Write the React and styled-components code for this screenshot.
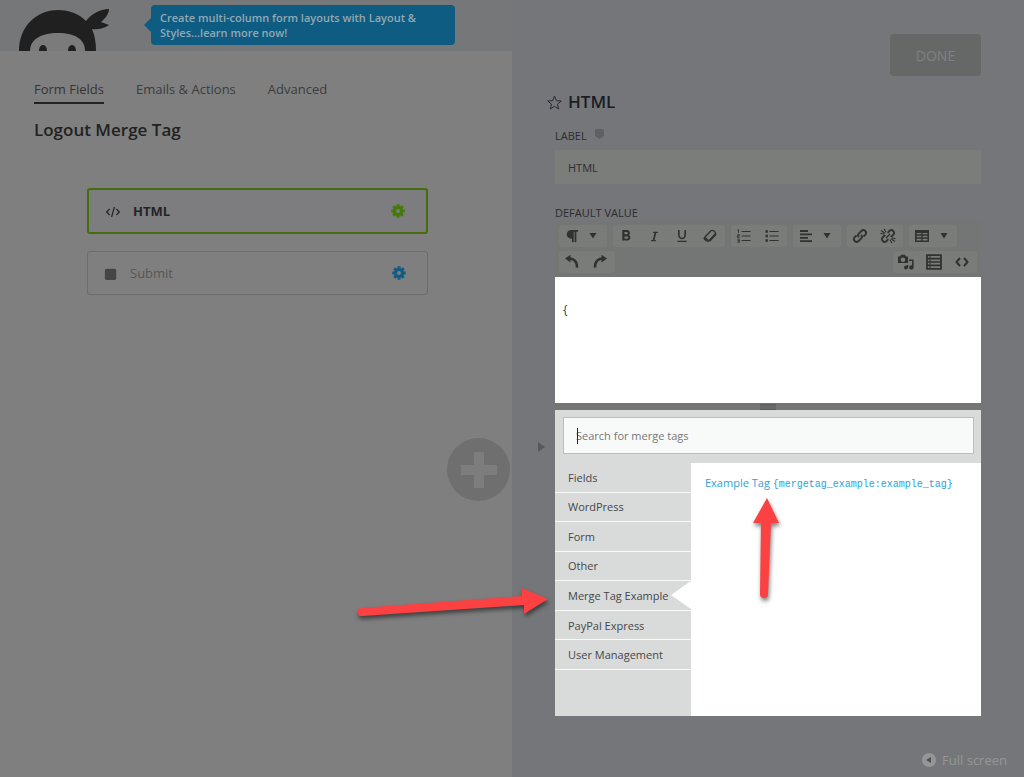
import React, { useState } from 'react';
import styled, { createGlobalStyle, css } from 'styled-components';
import { FaParagraph, FaItalic } from 'react-icons/fa';
import { MdFormatBold, MdFormatUnderlined } from 'react-icons/md';

const GlobalStyle = createGlobalStyle`
  * {
    box-sizing: border-box;
  }
  body {
    margin: 0;
    background-color: #757679;
    font-family: 'Open Sans', 'Noto Sans', sans-serif;
    font-size: 11px;
    color: #2e2f30;
  }
  button, input {
    font: inherit;
    color: inherit;
  }
  a {
    text-decoration: none;
    color: inherit;
  }
`;

const Page = styled.div`
  position: relative;
  display: grid;
  grid-template-columns: 1fr 1fr;
  min-height: 100vh;
`;

/* builder side */

const Builder = styled.main`
  display: flex;
  flex-direction: column;
  position: relative;
  background-color: #7f7f7f;
`;

const Header = styled.header`
  display: flex;
  align-items: flex-start;
  gap: 41px;
  height: 51px;
  padding: 5px 0 0 18px;
  background-color: #767778;
`;

const Logo = styled.svg`
  flex: none;
  margin-top: 4px;
`;

const Promo = styled.a`
  position: relative;
  width: 304px;
  height: 40px;
  padding: 5px 9px;
  border-radius: 4px;
  background-color: #0f5c82;
  color: #93a9b4;
  font-size: 11px;
  font-weight: 600;
  line-height: 15px;

  &::before {
    content: '';
    position: absolute;
    left: -7px;
    top: 13px;
    border: 7px solid transparent;
    border-left: 0;
    border-right-color: #0f5c82;
  }
`;

const Tabs = styled.nav`
  display: flex;
  gap: 32px;
  padding: 28px 34px 0;
`;

const Tab = styled.a`
  height: 25px;
  font-size: 13px;
  line-height: 20px;
  color: ${(props) => (props.$active ? '#343434' : '#3c3c3c')};
  border-bottom: 2px solid ${(props) => (props.$active ? '#222' : 'transparent')};
`;

const FormTitle = styled.h1`
  margin: 14px 34px 0;
  font-size: 17px;
  font-weight: 600;
  line-height: 24px;
  color: #222;
`;

const FieldList = styled.div`
  display: flex;
  flex-direction: column;
  gap: 17px;
  padding: 46px 84px 0 87px;
`;

const Field = styled.div`
  display: flex;
  align-items: center;
  height: ${(props) => (props.$active ? 46 : 44)}px;
  padding: 0 21px 0 16px;
  gap: 12px;
  border: 2px solid #436d0e;
  border-radius: 3px;
  background-color: #7d7d80;
  font-size: 13px;
  font-weight: 700;
  color: #242426;

  ${(props) =>
    !props.$active &&
    css`
      border: 1px solid #6b6c6e;
      background-color: #7f7f7f;
      font-weight: 400;
      color: #565656;
    `}
`;

const FieldName = styled.span`
  flex: 1;
  line-height: 20px;
`;

const GearButton = styled.button`
  display: flex;
  padding: 0;
  border: 0;
  background: none;
  color: ${(props) => props.$color};
`;

const AddButton = styled.button`
  position: absolute;
  right: 2px;
  top: 438px;
  width: 63px;
  height: 63px;
  padding: 0;
  border: 0;
  border-radius: 50%;
  background-color: #6f6f6f;
`;

/* drawer side */

const Drawer = styled.aside`
  position: relative;
  display: flex;
  flex-direction: column;
  padding: 34px 43px 0;
  background-color: #757679;
`;

const DrawerToggle = styled.button`
  position: absolute;
  left: 25px;
  top: 442px;
  display: flex;
  padding: 0;
  border: 0;
  background: none;
`;

const DoneButton = styled.button`
  align-self: flex-end;
  width: 91px;
  height: 42px;
  border: 0;
  border-radius: 4px;
  background-color: #666867;
  color: #808182;
  font-size: 14px;
`;

const DrawerTitle = styled.h2`
  display: flex;
  align-items: center;
  gap: 6px;
  margin: 14px 0 0 -8px;
  font-size: 17px;
  font-weight: 600;
  line-height: 24px;
  color: #1b1d23;
`;

const Label = styled.label`
  display: flex;
  gap: 8px;
  margin-top: ${(props) => props.$top}px;
  font-size: 11px;
  line-height: 16px;
  color: #2b2c2e;
`;

const LabelInput = styled.input`
  width: 100%;
  height: 34px;
  margin-top: 6px;
  padding: 0 13px;
  border: 0;
  background-color: #7b7d7b;
  color: #2b2c2b;
`;

const Editor = styled.section`
  display: flex;
  flex-direction: column;
  background-color: #747675;
`;

const Toolbar = styled.div`
  display: flex;
  flex-direction: column;
  gap: 4px;
  padding: 4px 4px;
`;

const ToolRow = styled.div`
  display: flex;
  gap: 6px;
`;

const ToolGroup = styled.div`
  display: flex;
  margin-left: ${(props) => (props.$end ? 'auto' : 0)};
  border-radius: 3px;
  background-color: #7a7c7a;
`;

const ToolButton = styled.button`
  display: flex;
  align-items: center;
  justify-content: center;
  gap: 10px;
  width: ${(props) => (props.$menu ? 48 : 28)}px;
  height: 22px;
  padding: 0 ${(props) => (props.$menu ? 4 : 2)}px 0 0;
  border: 0;
  background: none;
  color: #303231;
`;

const TextArea = styled.textarea`
  display: block;
  width: 100%;
  height: 126px;
  padding: 24px 8px;
  border: 0;
  outline: 0;
  resize: none;
  background-color: #fff;
  color: #444;
  font-family: inherit;
  font-size: 12px;
  line-height: 18px;
`;

const Grip = styled.div`
  display: flex;
  justify-content: center;
  align-items: center;
  height: 7px;

  &::before {
    content: '';
    width: 16px;
    height: 4px;
    border: 1px solid #5a5b5b;
    border-width: 1px 0;
    background-color: #686a69;
  }
`;

const TagBox = styled.section`
  display: flex;
  flex-direction: column;
  background-color: #d9dbdb;
`;

const SearchWrap = styled.div`
  position: relative;
  padding: 7px 7px 9px 8px;
`;

const SearchInput = styled.input`
  display: block;
  width: 100%;
  height: 37px;
  padding: 0 12px;
  border: 1px solid #a9c3cf;
  outline: 0;
  background-color: #f8fafa;
  color: #424242;
  caret-color: transparent;

  &::placeholder {
    color: #777;
    opacity: 1;
  }
`;

const Caret = styled.span`
  position: absolute;
  left: 22px;
  top: 18px;
  width: 1px;
  height: 16px;
  background-color: #222;
`;

const TagBody = styled.div`
  display: grid;
  grid-template-columns: 136px 1fr;
  min-height: 253px;
`;

const Categories = styled.ul`
  display: grid;
  grid-template-rows: repeat(7, 1fr);
  height: 207px;
  margin: 0;
  padding: 0;
  list-style: none;
`;

const Category = styled.li`
  position: relative;
  display: flex;
  border-bottom: 1px solid #fafafa;

  ${(props) =>
    props.$active &&
    css`
      &::after {
        content: '';
        position: absolute;
        right: 0;
        top: 0;
        border: 14px solid transparent;
        border-left: 0;
        border-right: 20px solid #fff;
      }
    `}
`;

const CategoryButton = styled.button`
  flex: 1;
  padding: 0 0 0 13px;
  border: 0;
  background: none;
  color: #464748;
  text-align: left;
  white-space: nowrap;
`;

const TagList = styled.div`
  padding: 11px 14px;
  background-color: #fff;
  color: #2ea2d4;
  line-height: 18px;
  white-space: nowrap;
`;

const TagCode = styled.code`
  font-family: 'Liberation Mono', 'Courier New', monospace;
  font-size: 10px;
`;

const FullScreen = styled.a`
  display: flex;
  align-items: center;
  align-self: flex-end;
  gap: 6px;
  margin: auto -26px 7px 0;
  color: #959698;
  font-size: 13px;
  line-height: 20px;
`;

const Arrows = styled.svg`
  position: absolute;
  left: 340px;
  top: 480px;
  pointer-events: none;
  filter: drop-shadow(1px 3px 2px rgba(0, 0, 0, 0.5));
`;

const Icon = ({ size = 16, box = 16, children }) => (
  <svg
    width={size}
    height={size}
    viewBox={`0 0 ${box} ${box}`}
    fill="none"
    stroke="currentColor"
    strokeWidth="1.6"
    aria-hidden="true"
  >
    {children}
  </svg>
);

const CaretDown = () => (
  <svg width="8" height="6" viewBox="0 0 8 6" fill="currentColor" aria-hidden="true">
    <path d="M0.5 0h7L4 5.5z" />
  </svg>
);

const Gear = () => (
  <Icon size={14}>
    <circle cx="8" cy="8" r="4" strokeWidth="3.6" />
    {[0, 45, 90, 135].map((deg) => (
      <path
        key={deg}
        d="M8 0.3v3.5M8 12.2v3.5"
        strokeWidth="3.4"
        transform={`rotate(${deg} 8 8)`}
      />
    ))}
  </Icon>
);

const Eraser = () => (
  <Icon>
    <path d="M2.5 9.5 9 2.8q1.2-1 2.6 0l1.2 1q1.4 1.2.2 2.6l-5.8 6.5H4.4L2.4 11q-.6-.8.1-1.5z" strokeWidth="1.3" />
    <path d="M2.6 9.8 7 13.2M7.4 13 14 5.8" strokeWidth="2" />
  </Icon>
);

const OrderedList = () => (
  <Icon>
    <path d="M5.5 3.5h9M5.5 8h9M5.5 12.5h9" strokeWidth="1.2" />
    <path d="M2.5 1.5v3.4M1.3 2.3l1.2-.6M1.3 6.6h2v1.3h-2v1.5h2.3M1.3 11.2h2v1.5h-1.5 1.5v1.6h-2" strokeWidth="0.9" />
  </Icon>
);

const BulletList = () => (
  <Icon>
    <path d="M5.5 3.5h9M5.5 8h9M5.5 12.5h9" strokeWidth="1.2" />
    <path d="M1.5 3.5h2.4M1.5 8h2.4M1.5 12.5h2.4" strokeWidth="2.4" />
  </Icon>
);

const AlignLeft = () => (
  <Icon size={14} box={14}>
    <path d="M1 2h8M1 5.4h12M1 8.8h8M1 12.2h12" strokeWidth="1.8" />
  </Icon>
);

const linkPath =
  'M7 9.2a2.7 2.7 0 0 1 0-3.8l2.6-2.6a2.7 2.7 0 0 1 3.8 3.8l-2 2M9 6.8a2.7 2.7 0 0 1 0 3.8l-2.6 2.6a2.7 2.7 0 0 1-3.8-3.8l2-2';

const LinkIcon = () => (
  <Icon>
    <path d={linkPath} strokeWidth="1.9" />
  </Icon>
);

const UnlinkIcon = () => (
  <Icon>
    <path
      d="M7.6 4.8l2-2a2.7 2.7 0 0 1 3.8 3.8l-2.6 2.6M8.4 11.2l-2 2a2.7 2.7 0 0 1-3.8-3.8l2.6-2.6"
      strokeWidth="1.9"
    />
    <path d="M1 2.5l4 2.8M4 .8l2 3.4M.6 5.4l3.4.6M15 13.5l-4-2.8M12 15.2l-2-3.4M15.4 10.6l-3.4-.6" strokeWidth="1.1" />
    <path d="M10 6l-4 4" strokeWidth="1.4" />
  </Icon>
);

const TableIcon = () => (
  <Icon>
    <path d="M1.8 2.8h12.4v10.4H1.8z" strokeWidth="1.6" />
    <path d="M1.5 3.8h13" strokeWidth="2.4" />
    <path d="M2 7h12M2 10h12M8 4v9" strokeWidth="1.3" />
  </Icon>
);

const Undo = () => (
  <Icon>
    <path d="M4 4.6c6-.4 9.2 2.8 9 9" strokeWidth="2.5" />
    <path d="M1 4.6 6.5.8v7.6z" fill="currentColor" stroke="none" />
  </Icon>
);

const Redo = () => (
  <Icon>
    <path d="M12 4.6c-6-.4-9.2 2.8-9 9" strokeWidth="2.5" />
    <path d="M15 4.6 9.5.8v7.6z" fill="currentColor" stroke="none" />
  </Icon>
);

const Media = () => (
  <Icon>
    <path
      d="M0 2.5h2L3 .8h4l1 1.7h2V9H0zM5 3.4a2.3 2.3 0 1 0 0 4.6 2.3 2.3 0 0 0 0-4.6z"
      fill="currentColor"
      stroke="none"
      fillRule="evenodd"
    />
    <path d="M9.5 13.5V11M11 6.2h3.8v6.6" strokeWidth="1.6" />
    <circle cx="8" cy="13.6" r="2" fill="currentColor" stroke="none" />
    <circle cx="13.4" cy="13.4" r="2.2" fill="currentColor" stroke="none" />
  </Icon>
);

const MergeTags = () => (
  <Icon>
    <path d="M1 1.2h14v13.6H1z" strokeWidth="1.8" />
    <path d="M1 4.6h14M1 8h14M1 11.4h14" strokeWidth="1.6" />
    <path d="M4 1v14" strokeWidth="1" />
  </Icon>
);

const CodeIcon = () => (
  <Icon>
    <path d="M6 4 2.5 8 6 12M10 4l3.5 4L10 12" strokeWidth="2" />
  </Icon>
);

const categories = [
  'Fields',
  'WordPress',
  'Form',
  'Other',
  'Merge Tag Example',
  'PayPal Express',
  'User Management',
];

function NinjaLogo() {
  return (
    <Logo width="92" height="42" viewBox="0 0 92 42" role="img" aria-label="Ninja Forms">
      <path
        d="M1 42C1 18 18 1 40 1c12 0 21 4 28 11C73 5 82 0 91 0c0 4-3 9-8 13l8 3c-6 4-12 5-17 4 3 7 4 14 4 22z"
        fill="#202020"
      />
      <path d="M12 42c0-11 10-18 28-18s27 7 27 18z" fill="#7b7b7b" />
      <path d="M21 42c0-8 8-8 8 0zM50 42c0-8 8-8 8 0z" fill="#202020" />
    </Logo>
  );
}

function BuilderPanel() {
  return (
    <Builder>
      <Header>
        <NinjaLogo />
        <Promo href="#layout">
          Create multi-column form layouts with Layout &amp; Styles...learn more now!
        </Promo>
      </Header>
      <Tabs>
        <Tab href="#fields" $active>
          Form Fields
        </Tab>
        <Tab href="#actions">Emails &amp; Actions</Tab>
        <Tab href="#advanced">Advanced</Tab>
      </Tabs>
      <FormTitle>Logout Merge Tag</FormTitle>
      <FieldList>
        <Field $active>
          <Icon size={16}>
            <path d="M4.6 6 1.6 9l3 3M11.4 6l3 3-3 3M9.4 4 6.6 14" strokeWidth="1.2" />
          </Icon>
          <FieldName>HTML</FieldName>
          <GearButton $color="#447a08" aria-label="HTML settings">
            <Gear />
          </GearButton>
        </Field>
        <Field>
          <Icon size={14}>
            <rect x="1" y="3" width="13" height="13" rx="2" fill="#454545" stroke="none" />
          </Icon>
          <FieldName>Submit</FieldName>
          <GearButton $color="#125c84" aria-label="Submit settings">
            <Gear />
          </GearButton>
        </Field>
      </FieldList>
      <AddButton aria-label="Add new field">
        <svg width="63" height="63" viewBox="0 0 63 63">
          <path d="M32 14v36M14 32h36" stroke="#7d7d7d" strokeWidth="10" />
        </svg>
      </AddButton>
    </Builder>
  );
}

function EditorToolbar() {
  return (
    <Toolbar>
      <ToolRow>
        <ToolGroup>
          <ToolButton $menu aria-label="Paragraph style">
            <FaParagraph size={14} />
            <CaretDown />
          </ToolButton>
        </ToolGroup>
        <ToolGroup>
          <ToolButton aria-label="Bold">
            <MdFormatBold size={18} />
          </ToolButton>
          <ToolButton aria-label="Italic">
            <FaItalic size={11} />
          </ToolButton>
          <ToolButton aria-label="Underline">
            <MdFormatUnderlined size={16} />
          </ToolButton>
          <ToolButton aria-label="Clear formatting">
            <Eraser />
          </ToolButton>
        </ToolGroup>
        <ToolGroup>
          <ToolButton aria-label="Ordered list">
            <OrderedList />
          </ToolButton>
          <ToolButton aria-label="Unordered list">
            <BulletList />
          </ToolButton>
        </ToolGroup>
        <ToolGroup>
          <ToolButton $menu aria-label="Align">
            <AlignLeft />
            <CaretDown />
          </ToolButton>
        </ToolGroup>
        <ToolGroup>
          <ToolButton aria-label="Link">
            <LinkIcon />
          </ToolButton>
          <ToolButton aria-label="Unlink">
            <UnlinkIcon />
          </ToolButton>
        </ToolGroup>
        <ToolGroup>
          <ToolButton $menu aria-label="Table">
            <TableIcon />
            <CaretDown />
          </ToolButton>
        </ToolGroup>
      </ToolRow>
      <ToolRow>
        <ToolGroup>
          <ToolButton aria-label="Undo">
            <Undo />
          </ToolButton>
          <ToolButton aria-label="Redo">
            <Redo />
          </ToolButton>
        </ToolGroup>
        <ToolGroup $end>
          <ToolButton aria-label="Insert media">
            <Media />
          </ToolButton>
          <ToolButton aria-label="Insert merge tag">
            <MergeTags />
          </ToolButton>
          <ToolButton aria-label="Code view">
            <CodeIcon />
          </ToolButton>
        </ToolGroup>
      </ToolRow>
    </Toolbar>
  );
}

function MergeTagBox() {
  const [active, setActive] = useState('Merge Tag Example');

  return (
    <TagBox>
      <SearchWrap>
        <SearchInput type="text" placeholder="Search for merge tags" aria-label="Search for merge tags" />
        <Caret />
      </SearchWrap>
      <TagBody>
        <Categories>
          {categories.map((name) => (
            <Category key={name} $active={name === active}>
              <CategoryButton onClick={() => setActive(name)}>{name}</CategoryButton>
            </Category>
          ))}
        </Categories>
        <TagList>
          <a href="#example-tag">
            Example Tag <TagCode>{'{mergetag_example:example_tag}'}</TagCode>
          </a>
        </TagList>
      </TagBody>
    </TagBox>
  );
}

function SettingsDrawer() {
  return (
    <Drawer>
      <DrawerToggle aria-label="Close drawer">
        <svg width="9" height="10" viewBox="0 0 9 10">
          <path d="M1 0v10l7-5z" fill="#58595b" />
        </svg>
      </DrawerToggle>
      <DoneButton>DONE</DoneButton>
      <DrawerTitle>
        <Icon size={15}>
          <path
            d="M8 1.2l2 4.8 5.2.4-4 3.4 1.3 5.1L8 12.1l-4.5 2.8 1.3-5.1-4-3.4L6 6z"
            strokeWidth="0.9"
          />
        </Icon>
        HTML
      </DrawerTitle>
      <Label htmlFor="label" $top={14}>
        LABEL
        <svg width="9" height="11" viewBox="0 0 9 11" aria-hidden="true">
          <path d="M1 1h7l1 1v6L4.5 11 0 8V2z" fill="#5f6062" />
        </svg>
      </Label>
      <LabelInput id="label" type="text" defaultValue="HTML" />
      <Label htmlFor="default-value" $top={21}>
        DEFAULT VALUE
      </Label>
      <Editor>
        <EditorToolbar />
        <TextArea id="default-value" defaultValue="{" />
        <Grip />
      </Editor>
      <MergeTagBox />
      <FullScreen href="#fullscreen">
        <svg width="14" height="14" viewBox="0 0 14 14" aria-hidden="true">
          <circle cx="7" cy="7" r="7" fill="#959698" />
          <path d="M9 4v6L4 7z" fill="#4f5052" />
        </svg>
        Full screen
      </FullScreen>
    </Drawer>
  );
}

function App() {
  return (
    <>
      <GlobalStyle />
      <Page>
        <BuilderPanel />
        <SettingsDrawer />
        <Arrows width="460" height="150" viewBox="0 0 460 150" fill="#fb4141" aria-hidden="true">
          <path d="M21 128L182 116V108L208 119 184 134V125L22 136A4 4 0 0 1 21 128z" />
          <path d="M427 18L439 43H431L428 114A4 4 0 0 1 420 114L421 43H413z" />
        </Arrows>
      </Page>
    </>
  );
}

export default App;
